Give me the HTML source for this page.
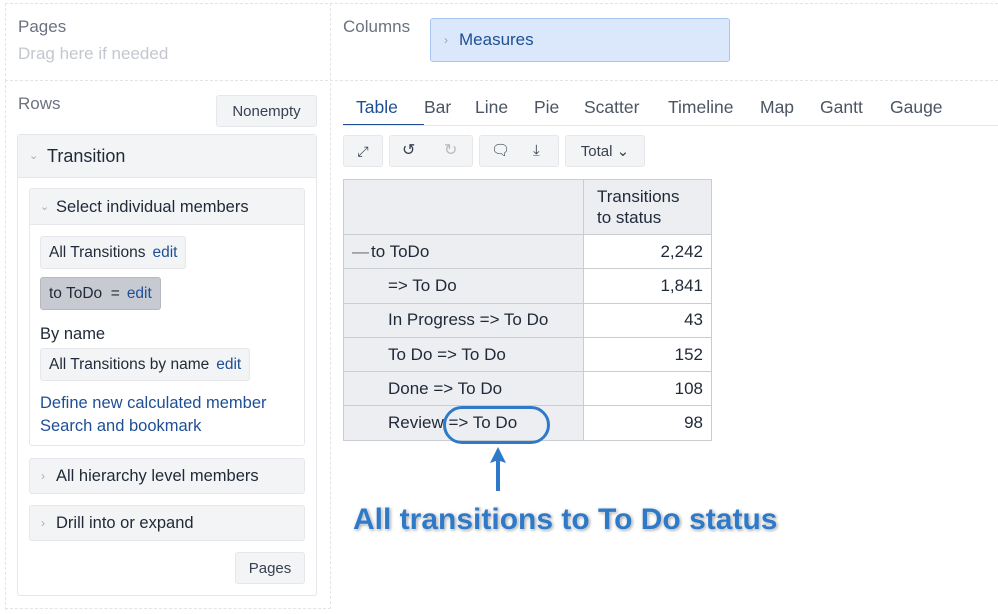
<!DOCTYPE html><html><head><style>
*{box-sizing:border-box}
body{margin:0;width:998px;height:614px;background:#fff;font-family:"Liberation Sans",sans-serif;color:#1f2937;position:relative;overflow:hidden}
.a{position:absolute}
.lbl{font-size:17px;color:#6b7280}
.btn{position:absolute;background:#f3f4f6;border:1px solid #e5e7eb;border-radius:3px;font-size:15px;color:#374151;text-align:center}
.chip{position:absolute;background:#f3f4f6;border:1px solid #e5e7eb;border-radius:3px;font-size:15.5px;padding:0 8px;line-height:31px;color:#1f2937}
.chip b{font-weight:normal;color:#1e4f95;margin-left:7px}
.link{color:#1e4f95;font-size:16.5px}
table{border-collapse:collapse;font-size:17px}
td{border:1px solid #c9ccd1;height:34.3px;padding:0 8px}
td.h{background:#eceef2}
td.n{text-align:right;background:#fff}
.tab{position:absolute;top:97px;font-size:17.5px;color:#4b5563}
</style></head><body>
<div class="a" style="left:5px;top:3px;width:993px;height:78px;border:1px dashed #e2e4e8;border-right:none"></div>
<div class="a" style="left:330px;top:3px;width:1px;height:606px;border-left:1px dashed #e2e4e8"></div>
<div class="a" style="left:5px;top:80px;width:1px;height:530px;border-left:1px dashed #e2e4e8"></div>
<div class="a" style="left:5px;top:608px;width:326px;border-top:1px dashed #e2e4e8"></div>
<div class="a lbl" style="left:18px;top:17px">Pages</div>
<div class="a" style="left:18px;top:44px;font-size:17px;color:#c4c8ce">Drag here if needed</div>
<div class="a lbl" style="left:343px;top:17px">Columns</div>
<div class="a" style="left:430px;top:18px;width:300px;height:44px;background:#dbe8fb;border:1px solid #a8c7f0;border-radius:3px;font-size:17px;color:#1e4f95;line-height:42px;padding-left:28px">Measures<span style="position:absolute;left:13px;color:#8aa;font-size:12px">›</span></div>
<div class="a lbl" style="left:18px;top:94px">Rows</div>
<div class="btn" style="left:216px;top:95px;width:101px;height:32px;line-height:31px">Nonempty</div>
<div class="a" style="left:17px;top:134px;width:300px;height:462px;border:1px solid #e5e7eb;border-radius:3px"></div>
<div class="a" style="left:18px;top:135px;width:298px;height:43px;background:#f3f4f6;border-bottom:1px solid #e5e7eb;font-size:18px;line-height:43px;padding-left:29px">Transition<span style="position:absolute;left:11px;color:#aaa;font-size:11px">⌄</span></div>
<div class="a" style="left:29px;top:188px;width:276px;height:258px;border:1px solid #e5e7eb;border-radius:3px"></div>
<div class="a" style="left:30px;top:189px;width:274px;height:36px;background:#f3f4f6;border-bottom:1px solid #e5e7eb;font-size:16.5px;line-height:36px;padding-left:26px">Select individual members<span style="position:absolute;left:10px;color:#aaa;font-size:11px">⌄</span></div>
<div class="chip" style="left:40px;top:236px">All Transitions<b>edit</b></div>
<div class="chip" style="left:40px;top:277px;background:#c7cbd1;border-color:#b4b9c0">to ToDo &nbsp;=<b>edit</b></div>
<div class="a" style="left:40px;top:325px;font-size:16.5px">By name</div>
<div class="chip" style="left:40px;top:348px">All Transitions by name<b>edit</b></div>
<div class="a link" style="left:40px;top:394px">Define new calculated member</div>
<div class="a link" style="left:40px;top:417px">Search and bookmark</div>
<div class="a" style="left:29px;top:458px;width:276px;height:36px;background:#f3f4f6;border:1px solid #e5e7eb;border-radius:3px;font-size:16.5px;line-height:35px;padding-left:26px">All hierarchy level members<span style="position:absolute;left:11px;color:#aaa;font-size:12px">›</span></div>
<div class="a" style="left:29px;top:505px;width:276px;height:36px;background:#f3f4f6;border:1px solid #e5e7eb;border-radius:3px;font-size:16.5px;line-height:35px;padding-left:26px">Drill into or expand<span style="position:absolute;left:11px;color:#aaa;font-size:12px">›</span></div>
<div class="btn" style="left:235px;top:552px;width:70px;height:32px;line-height:31px">Pages</div>
<div class="tab" style="left:356px;color:#1e4f95">Table</div>
<div class="a" style="left:343px;top:124px;width:81px;height:2px;background:#1e4f95"></div>
<div class="a" style="left:343px;top:125px;width:655px;height:1px;background:#e5e7eb"></div>
<div class="tab" style="left:424px">Bar</div><div class="tab" style="left:475px">Line</div><div class="tab" style="left:534px">Pie</div><div class="tab" style="left:584px">Scatter</div><div class="tab" style="left:668px">Timeline</div><div class="tab" style="left:760px">Map</div><div class="tab" style="left:820px">Gantt</div><div class="tab" style="left:890px">Gauge</div>
<div class="btn" style="left:343px;top:135px;width:40px;height:32px;line-height:30px;font-size:14px">⤢</div>
<div class="btn" style="left:389px;top:135px;width:84px;height:32px;line-height:30px;font-size:16px"><span style="position:absolute;left:12px">↺</span><span style="position:absolute;left:54px;color:#bbb">↻</span></div>
<div class="btn" style="left:479px;top:135px;width:80px;height:32px;line-height:30px;font-size:15px"><span style="position:absolute;left:11px">🗨︎</span><span style="position:absolute;left:53px">⤓</span></div>
<div class="btn" style="left:565px;top:135px;width:80px;height:32px;line-height:31px">Total ⌄</div>
<table class="a" style="left:343px;top:179px;width:369px">
<tr><td class="h" style="width:240px;height:55px"></td><td class="h" style="line-height:21px;padding-left:13px">Transitions<br>to status</td></tr>
<tr><td class="h"><span style="color:#777;margin-right:2px">—</span>to ToDo</td><td class="n">2,242</td></tr>
<tr><td class="h" style="padding-left:44px">=&gt; To Do</td><td class="n">1,841</td></tr>
<tr><td class="h" style="padding-left:44px">In Progress =&gt; To Do</td><td class="n">43</td></tr>
<tr><td class="h" style="padding-left:44px">To Do =&gt; To Do</td><td class="n">152</td></tr>
<tr><td class="h" style="padding-left:44px">Done =&gt; To Do</td><td class="n">108</td></tr>
<tr><td class="h" style="padding-left:44px">Review =&gt; To Do</td><td class="n">98</td></tr>
</table>
<div class="a" style="left:443px;top:406px;width:107px;height:38px;border:3px solid #2f7ac8;border-radius:20px"></div>
<svg class="a" style="left:488px;top:447px" width="20" height="45"><path d="M10 0 L18 16 L12 14 L12 44 L8 44 L8 14 L2 16 Z" fill="#2f7ac8"/></svg>
<div class="a" style="left:353px;top:503px;font-size:30px;font-weight:bold;color:#2f7ac8;text-shadow:0 0 2px #fff,1px 1px 3px #888">All transitions to To Do status</div>
</body></html>
